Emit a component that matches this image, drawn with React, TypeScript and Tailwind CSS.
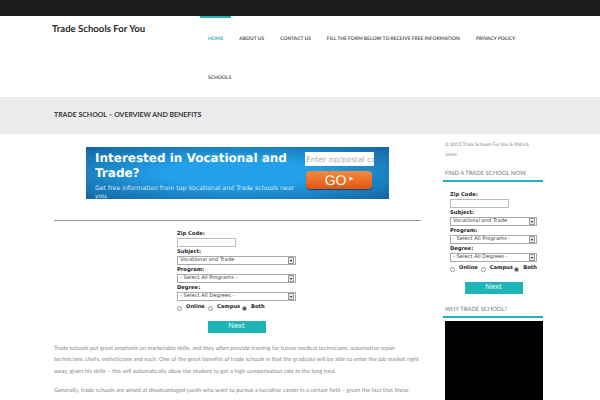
import React from 'react'

const navItems = ['About Us', 'Contact Us', 'Fill the form below to receive free information', 'Privacy Policy']

function SchoolForm({ selectWidth }: { selectWidth: string }) {
  return (
    <form className={`font-['DejaVu_Sans',sans-serif] text-[#222] ${selectWidth}`}>
      <label className="block pt-[2px] text-[5.2px] font-bold leading-[7px]">Zip Code:</label>
      <div className="h-[9px] w-[59px] border border-[#bbb] bg-white" />
      <Select label="Subject:" value="Vocational and Trade" />
      <Select label="Program:" value="- Select All Programs -" />
      <Select label="Degree:" value="- Select All Degrees -" />
      <div className="mt-[3px] flex h-[9px] items-center text-[5.2px] font-bold">
        <Radio />
        <span className="-mt-[2px] ml-[4px] w-[22px]">Online</span>
        <Radio />
        <span className="-mt-[2px] ml-[4px] w-[25px]">Campus</span>
        <Radio checked />
        <span className="-mt-[2px] ml-[4px]">Both</span>
      </div>
      <div className="mt-[8px] flex justify-center">
        <div className="flex h-[12px] w-[58px] items-center justify-center bg-[#1fb5b8] font-['Noto_Sans',sans-serif] text-[7.5px] font-normal text-[#e6f7f7]">Next</div>
      </div>
    </form>
  )
}

function Select({ label, value }: { label: string; value: string }) {
  return (
    <div>
      <label className="block pt-[2px] text-[5.2px] font-bold leading-[7px]">{label}</label>
      <div className="flex h-[9px] w-full items-center justify-between border border-[#aaa] bg-white pl-[2px] pr-[1px] text-[5.2px] font-normal leading-none text-[#444]">
        <span className="whitespace-nowrap">{value}</span>
        <span className="flex h-[7px] w-[6px] shrink-0 items-center justify-center border border-[#999] bg-[#e8e8e8] text-[4px] text-black">▾</span>
      </div>
    </div>
  )
}

function Radio({ checked }: { checked?: boolean }) {
  return (
    <span className="flex h-[5px] w-[5px] shrink-0 items-center justify-center rounded-full border border-[#999] bg-white">
      {checked && <span className="h-[3px] w-[3px] rounded-full bg-[#444]" />}
    </span>
  )
}

export default function App() {
  return (
    <div className="h-[400px] w-[600px] overflow-hidden bg-white font-['Lato',sans-serif] [text-rendering:geometricPrecision]">
      <div className="h-[16px] bg-[#1b1b1b]" />

      <header className="flex h-[81px] pl-[52px]">
        <div className="w-[148px] pt-[7px] text-[9.6px] font-bold leading-[14px] text-[#2a2a2a]">Trade Schools For You</div>
        <nav className="flex w-[400px] flex-wrap content-start text-[4.95px] font-black uppercase text-[#666]">
          <a className="flex h-[42px] items-center border-t-2 border-[#1fb5b8] px-[8px] pt-[4px] text-[#3fb8bb]">Home</a>
          {navItems.map((item) => (
            <a key={item} className="flex h-[42px] items-center px-[8px] pt-[6px]">{item}</a>
          ))}
          <a className="flex h-[39px] w-full items-center px-[8px] pt-[3px]">Schools</a>
        </nav>
      </header>

      <div className="flex h-[37px] items-center bg-[#ebebeb] pl-[54px] text-[6.95px] font-bold uppercase text-[#333]">
        Trade School – Overview and Benefits
      </div>

      <div className="flex pl-[54px] pt-[7px]">
        <main className="w-[367px] pt-[6px]">
          <div className="flex justify-center">
            <div className="flex h-[52px] w-[303px] overflow-hidden bg-[radial-gradient(ellipse_at_center,#22a0ea_35%,#15659f_100%)] pl-[9px] font-['DejaVu_Sans',sans-serif] text-white">
              <div className="w-[201px] shrink-0 pt-[4px]">
                <div className="text-[12px] font-bold leading-[15px]">Interested in Vocational and Trade?</div>
                <div className="mt-[4px] text-[6.2px] leading-[8px] text-[#d5e8f5]">Get free information from top Vocational and Trade schools near you.</div>
              </div>
              <div className="ml-[9px] shrink-0 pt-[5px]">
                <input readOnly placeholder="Enter zip/postal code" className="block h-[14px] w-[69px] bg-white pl-[1px] text-[7.5px] outline-none placeholder:text-[#aaa]" />
                <div className="ml-[1px] mt-[5px] flex h-[18px] w-[66px] items-center justify-center rounded-[4px] bg-gradient-to-b from-[#f58a3c] to-[#e2550e] font-['Liberation_Sans',sans-serif] text-[14px] text-white shadow-[0_1px_1px_#0d4a78]">
                  GO<span className="ml-[3px] text-[5px]">▶</span>
                </div>
              </div>
            </div>
          </div>

          <div className="mt-[21px] border-t border-[#999]" />

          <div className="ml-[123px] mt-[8px]">
            <SchoolForm selectWidth="w-[119px]" />
          </div>

          <div className="mt-[10px] text-[5.8px] leading-[11.4px] text-[#888]">
            <p>Trade schools put great emphasis on marketable skills, and they often provide training for future medical technicians, automotive repair technicians, chefs, estheticians and such. One of the great benefits of trade schools is that the graduate will be able to enter the job market right away, given his skills – this will automatically allow the student to get a high compensation rate in the long haul.</p>
            <p className="mt-[8px]">Generally, trade schools are aimed at disadvantaged youth who want to pursue a lucrative career in a certain field – given the fact that these schools make a career in vocational and trade a shortcut toward skills and knowledge in a short time, giving you an option of getting a job.</p>
          </div>
        </main>

        <aside className="ml-[22px] w-[100px]">
          <p className="pl-[2px] text-[4.8px] leading-[9.5px] text-[#888]">© 2013 Trade Schools For You &amp; Patrick<br />Jones</p>
          <h3 className="mt-[9px] border-b-2 border-[#1fb5b8] pb-[2px] pl-[2px] text-[5.85px] uppercase leading-[9px] text-[#777]">Find a Trade School Now</h3>
          <div className="ml-[7px] mt-[8px]">
            <SchoolForm selectWidth="w-[87px]" />
          </div>
          <h3 className="mt-[11px] border-b-2 border-[#1fb5b8] pb-[2px] pl-[2px] text-[5.85px] uppercase leading-[9px] text-[#777]">Why Trade School?</h3>
          <div className="ml-[2px] mt-[3px] h-[90px] w-[98px] bg-black" />
        </aside>
      </div>
    </div>
  )
}
